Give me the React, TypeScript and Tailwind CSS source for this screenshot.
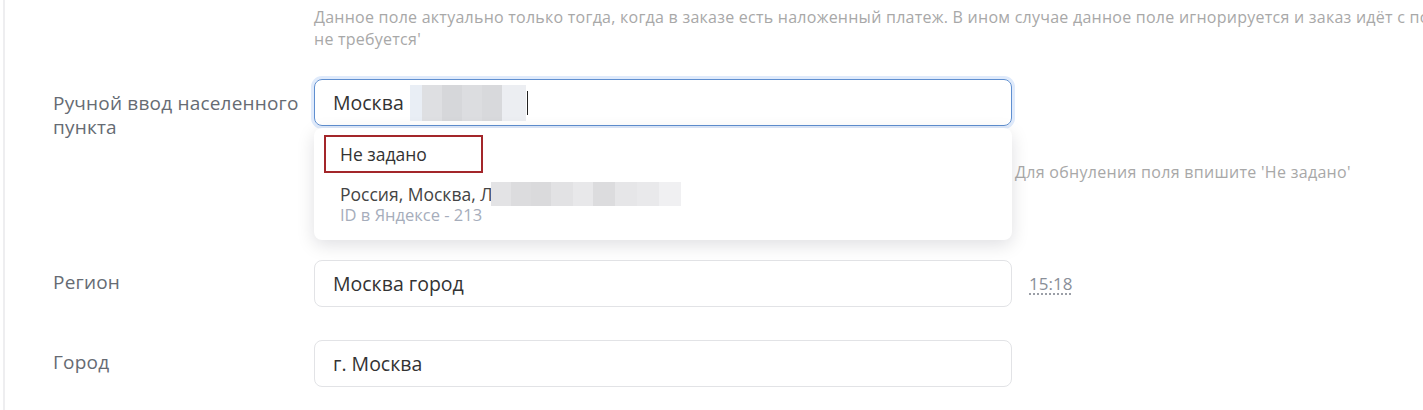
import { ReactNode } from "react";

function Label({ children, pt }: { children: ReactNode; pt: string }) {
    return (
        <div className={`w-[261px] shrink-0 text-[19px] leading-[24px] tracking-[0.2px] text-[#666b73] ${pt}`}>
            {children}
        </div>
    );
}

function Blur({ widths }: { widths: string[] }) {
    return (
        <span className="inline-flex h-full">
            {widths.map((w, i) => (
                <span key={i} className={`h-full ${w}`} />
            ))}
        </span>
    );
}

export default function App() {
    return (
        <div className="w-[1423px] h-[410px] overflow-hidden bg-white font-['Open_Sans','Noto_Sans',sans-serif]">
            <div className="ml-[3px] h-full border-l-2 border-[#eeeef0] pl-[48px]">
                {/* hint */}
                <div className="pl-[261px] pt-[6px] text-[16px] leading-[22px] tracking-[0.25px] text-[#a8a8a8]">
                    <div className="whitespace-nowrap">
                        Данное поле актуально только тогда, когда в заказе есть наложенный платеж. В ином случае данное поле игнорируется и заказ идёт с пометкой 'Оплата
                    </div>
                    <div>не требуется'</div>
                </div>

                {/* manual city */}
                <div className="mt-[29px] flex">
                    <Label pt="pt-[12px]">
                        Ручной ввод населенного
                        <br />
                        пункта
                    </Label>
                    <div className="w-[698px] shrink-0">
                        <div className="relative">
                            <div className="flex h-[47px] items-center rounded-[8px] border-[1.5px] border-[#5f8fd0] px-[18px] text-[19.5px] text-[#333] ring-[3px] ring-[#dfeafb]">
                                <span>Москва</span>
                                <span className="ml-[6px] flex h-[36px] items-center">
                                    <Blur widths={["w-[12px] bg-[#e9eef5]", "w-[20px] bg-[#dedfe2]", "w-[20px] bg-[#d6d7da]", "w-[20px] bg-[#dcdde0]", "w-[20px] bg-[#d8d9dc]", "w-[24px] bg-[#eceef2]"]} />
                                </span>
                                <span className="ml-[1px] h-[24px] w-[1.5px] bg-[#222]" />
                            </div>
                            <div className="absolute left-0 top-[49px] z-10 h-[112px] w-full rounded-[8px] bg-white pl-[10px] pt-[7px] shadow-[0_5px_18px_rgba(0,0,30,0.13)]">
                                <div className="flex h-[38px] w-[159px] items-center border-2 border-[#a3262a] pl-[14px] text-[17.5px] text-[#333]">
                                    Не задано
                                </div>
                                <div className="pl-[16px] pt-[9px]">
                                    <div className="flex h-[24px] items-center text-[17.5px] leading-[24px] text-[#444]">
                                        <span>Россия, Москва, Л</span>
                                        <span className="-ml-[2px] flex h-[24px] items-center">
                                            <Blur widths={["w-[20px] bg-[#e3e3e5]", "w-[20px] bg-[#dcdcde]", "w-[20px] bg-[#dadadc]", "w-[22px] bg-[#e2e2e4]", "w-[20px] bg-[#e8e8ea]", "w-[22px] bg-[#dcdcde]", "w-[22px] bg-[#e6e6e8]", "w-[22px] bg-[#e9e9eb]", "w-[22px] bg-[#f0f0f2]"]} />
                                        </span>
                                    </div>
                                    <div className="text-[16.5px] leading-[18px] text-[#a6adbb]">ID в Яндексе - 213</div>
                                </div>
                            </div>
                        </div>
                        <div className="mt-[36px] whitespace-nowrap pl-[701px] text-[16px] leading-[20px] tracking-[0.3px] text-[#a8a8a8]">
                            Для обнуления поля впишите 'Не задано'
                        </div>
                    </div>
                </div>

                {/* region */}
                <div className="mt-[78px] flex">
                    <Label pt="pt-[10px]">Регион</Label>
                    <div className="flex h-[47px] w-[698px] shrink-0 items-center rounded-[8px] border border-[#e2e3e6] px-[18px] text-[19.5px] text-[#333]">
                        Москва город
                    </div>
                    <div className="ml-[17px] mt-[14px] h-fit text-[17px] leading-[20px] text-[#8a8f99] underline decoration-dotted underline-offset-[4px]">
                        15:18
                    </div>
                </div>

                {/* city */}
                <div className="mt-[33px] flex">
                    <Label pt="pt-[10px]">Город</Label>
                    <div className="flex h-[47px] w-[698px] shrink-0 items-center rounded-[8px] border border-[#e2e3e6] px-[18px] text-[19.5px] text-[#333]">
                        г. Москва
                    </div>
                </div>
            </div>
        </div>
    );
}
